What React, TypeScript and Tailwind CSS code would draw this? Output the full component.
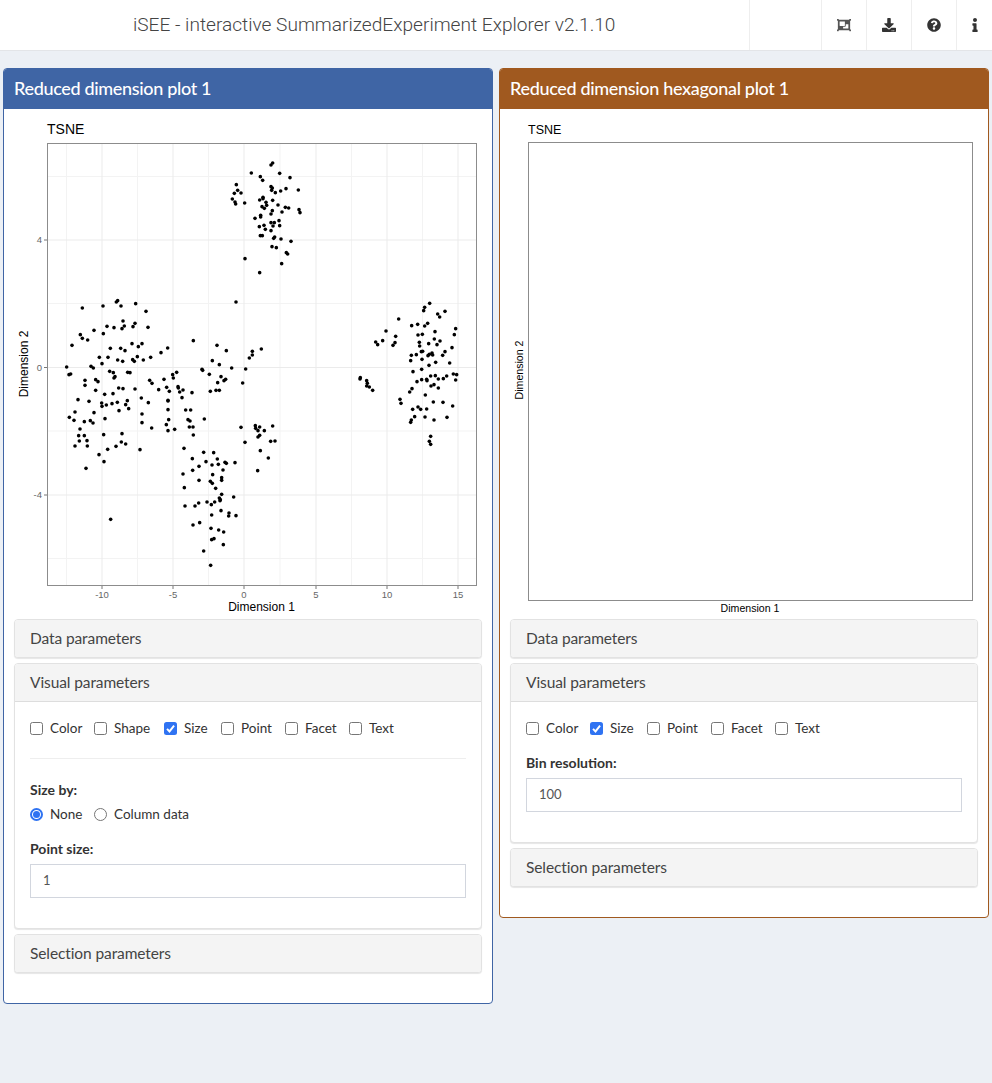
import { FaDownload, FaInfo, FaObjectGroup, FaQuestionCircle } from "react-icons/fa";

type Pt = [number, number];

// dots read off the reference in 3x crops, each group with its own crop origin
const toPlot = (pts: Pt[], ox: number, oy: number): Pt[] =>
  pts.map(([x, y]) => [ox + x / 3, oy + y / 3]);

const topCluster: Pt[] = [
  [158,69],[153,75],[94,99],[179,100],[121,110],[128,121],[210,113],[49,134],[153,140],[157,144],[155,151],[198,146],[182,153],[166,158],[235,150],[53,151],[43,160],[63,159],[37,177],[45,186],[47,192],[74,189],[129,172],[119,180],[129,176],[158,181],[138,187],[140,196],[126,200],[133,205],[174,195],[196,202],[206,204],[157,212],[153,222],[186,216],[237,209],[240,218],[122,226],[122,231],[105,235],[177,242],[153,248],[163,248],[118,260],[132,256],[159,258],[179,257],[136,268],[153,272],[121,287],[127,287],[164,291],[161,295],[183,297],[213,304],[156,320],[169,323],[199,338],[203,342],[75,356],[185,371],[119,398],
];

const leftCluster: Pt[] = [
  [233,32],[229,36],[127,54],[189,48],[243,48],[287,41],[318,64],[249,93],[201,109],[222,113],[253,108],[246,116],[285,100],[279,110],[324,112],[162,121],[190,131],[121,134],[127,145],[143,150],[96,166],[276,161],[306,161],[211,175],[242,175],[255,182],[295,170],[178,202],[204,202],[233,210],[248,214],[278,209],[283,214],[292,200],[310,210],[186,221],[80,231],[153,229],[160,234],[209,244],[220,248],[225,260],[222,264],[263,247],[270,248],[92,252],[87,254],[135,271],[135,286],[167,269],[174,275],[329,271],[167,301],[236,294],[249,296],[285,297],[194,313],[219,311],[304,324],[114,329],[147,334],[185,339],[186,349],[199,345],[216,341],[232,337],[262,332],[257,344],[266,356],[325,338],[237,362],[105,366],[162,368],[306,372],[88,382],[102,391],[133,395],[151,392],[159,399],[195,386],[306,398],[120,417],[116,437],[133,437],[191,434],[246,431],[118,453],[141,452],[244,456],[257,462],[105,468],[142,468],[228,469],[203,478],[300,479],[177,494],[192,515],[138,535],[212,688],
];

const middleCluster: Pt[] = [
  [130,32],[53,54],[33,68],[2,82],[201,46],[229,62],[307,64],[307,75],[298,84],[334,57],[187,92],[208,104],[245,114],[156,118],[158,121],[287,117],[80,127],[68,134],[70,144],[42,148],[178,133],[213,140],[227,148],[222,152],[203,158],[278,159],[6,160],[50,172],[84,170],[85,174],[26,179],[58,184],[89,186],[99,180],[126,188],[181,184],[198,181],[208,181],[96,203],[54,211],[54,213],[54,239],[107,240],[122,240],[56,269],[114,269],[120,273],[163,267],[49,284],[118,291],[129,291],[273,292],[316,287],[317,295],[329,291],[324,302],[343,302],[368,288],[5,294],[54,302],[74,298],[130,315],[329,316],[324,321],[285,337],[362,334],[375,333],[102,355],[331,362],[161,367],[191,368],[355,384],[127,386],[168,395],[202,387],[225,397],[229,400],[255,398],[147,409],[186,405],[205,403],[128,421],[219,420],[323,422],[99,432],[188,434],[215,443],[215,451],[147,451],[181,454],[187,460],[103,473],[197,475],[215,493],[251,501],[208,504],[211,509],[210,512],[146,519],[171,516],[184,524],[194,516],[105,528],[135,528],[213,542],[237,549],[236,558],[258,557],[185,555],[149,578],[129,585],[183,595],[206,600],[221,606],[192,626],[185,629],[220,644],[161,663],[182,706],
];

const rightCluster: Pt[] = [
  [239,40],[224,52],[221,62],[263,72],[269,81],[285,64],[146,87],[233,100],[224,108],[203,103],[185,107],[108,123],[255,125],[317,116],[313,134],[204,135],[217,133],[137,139],[98,152],[77,156],[83,164],[135,158],[129,166],[253,147],[270,153],[208,157],[209,168],[236,161],[261,164],[306,173],[214,185],[218,184],[285,185],[278,196],[184,196],[199,194],[238,193],[246,189],[234,197],[248,195],[216,208],[182,212],[257,217],[299,219],[237,226],[215,238],[189,245],[310,252],[320,254],[317,270],[290,258],[280,266],[265,267],[256,257],[242,258],[230,268],[231,272],[215,269],[201,275],[31,263],[30,267],[50,272],[52,280],[50,288],[58,291],[68,301],[186,296],[179,306],[243,288],[252,284],[265,294],[226,315],[150,328],[153,340],[250,336],[279,337],[308,348],[188,358],[204,351],[212,358],[230,357],[194,380],[184,390],[182,397],[225,381],[252,390],[291,382],[242,439],[238,454],[242,463],
];

const dots: Pt[] = [
  ...toPlot(topCluster, 220, 140),
  ...toPlot(leftCluster, 40, 290),
  ...toPlot(middleCluster, 150, 330),
  ...toPlot(rightCluster, 350, 290),
  [236, 302],
];

const xTicks = [
  { x: 102, label: "-10" },
  { x: 173, label: "-5" },
  { x: 244, label: "0" },
  { x: 316, label: "5" },
  { x: 387, label: "10" },
  { x: 458, label: "15" },
];
const yTicks = [
  { y: 240, label: "4" },
  { y: 367.5, label: "0" },
  { y: 495, label: "-4" },
];
const xMinor = [66.5, 137.5, 208.5, 280, 351.5, 422.5];
const yMinor = [176.5, 303.5, 431, 558.5];

const plotFont = "'Liberation Sans', Arial, sans-serif";

function ScatterPlot() {
  return (
    <svg width={468} height={510} viewBox="14 109 468 510" className="block" style={{ fontFamily: plotFont }}>
      <text x={47} y={134} fontSize={14} fill="#000">TSNE</text>
      {xMinor.map((x) => <line key={x} x1={x} x2={x} y1={143} y2={585} stroke="#f3f3f3" />)}
      {yMinor.map((y) => <line key={y} x1={47} x2={476} y1={y} y2={y} stroke="#f3f3f3" />)}
      {xTicks.map((t) => <line key={t.x} x1={t.x} x2={t.x} y1={143} y2={585} stroke="#ebebeb" />)}
      {yTicks.map((t) => <line key={t.y} x1={47} x2={476} y1={t.y} y2={t.y} stroke="#ebebeb" />)}
      {dots.map(([x, y], i) => <circle key={i} cx={x} cy={y} r={1.8} fill="#000" />)}
      <rect x={47.5} y={143.5} width={429} height={442} fill="none" stroke="#8c8c8c" />
      {xTicks.map((t) => (
        <g key={t.label}>
          <line x1={t.x} x2={t.x} y1={586} y2={589} stroke="#777" />
          <text x={t.x} y={598} fontSize={9.5} fill="#666" textAnchor="middle">{t.label}</text>
        </g>
      ))}
      {yTicks.map((t) => (
        <g key={t.label}>
          <line x1={44} x2={47} y1={t.y} y2={t.y} stroke="#777" />
          <text x={42} y={t.y + 3} fontSize={9.5} fill="#666" textAnchor="end">{t.label}</text>
        </g>
      ))}
      <text x={261.5} y={611} fontSize={12} fill="#000" textAnchor="middle">Dimension 1</text>
      <text transform="translate(28 364) rotate(-90)" fontSize={12} fill="#000" textAnchor="middle">Dimension 2</text>
    </svg>
  );
}

function HexPlot() {
  return (
    <svg width={468} height={510} viewBox="510 109 468 510" className="block" style={{ fontFamily: plotFont }}>
      <text x={528} y={134} fontSize={12.5} fill="#000">TSNE</text>
      <rect x={528.5} y={142.5} width={444} height={458} fill="none" stroke="#8c8c8c" />
      <text x={750} y={612} fontSize={10.6} fill="#000" textAnchor="middle">Dimension 1</text>
      <text transform="translate(523 370) rotate(-90)" fontSize={10.6} fill="#000" textAnchor="middle">Dimension 2</text>
    </svg>
  );
}

function Check({ label, checked, className }: { label: string; checked?: boolean; className: string }) {
  return (
    <label className={`flex items-center gap-[7px] ${className}`}>
      {checked ? (
        <span className="flex h-[13px] w-[13px] items-center justify-center rounded-[2.5px] bg-[#2f73f2]">
          <svg width="11" height="11" viewBox="0 0 12 12" fill="none">
            <path d="M2.2 6.4 4.9 9.2 9.9 2.9" stroke="#fff" strokeWidth="2.1" />
          </svg>
        </span>
      ) : (
        <span className="h-[13px] w-[13px] rounded-[2.5px] border border-[#767676] bg-white" />
      )}
      {label}
    </label>
  );
}

function Radio({ label, checked, className }: { label: string; checked?: boolean; className: string }) {
  return (
    <label className={`flex items-center gap-[7px] ${className}`}>
      {checked ? (
        <span className="flex h-[13px] w-[13px] items-center justify-center rounded-full border-2 border-[#2f73f2] bg-white">
          <span className="h-[7px] w-[7px] rounded-full bg-[#2f73f2]" />
        </span>
      ) : (
        <span className="h-[13px] w-[13px] rounded-full border border-[#767676] bg-white" />
      )}
      {label}
    </label>
  );
}

function TextField({ value }: { value: string }) {
  return (
    <div className="flex h-[34px] items-center border border-[#d2d6de] bg-white pl-3 text-[13px] text-[#555]">
      {value}
    </div>
  );
}

function CollapseBox({ title, children }: { title: string; children?: React.ReactNode }) {
  return (
    <div className="mb-[5px] rounded-[4px] border border-[#e2e2e2] bg-white shadow-[0_1px_1px_rgba(0,0,0,0.1)]">
      <div
        className={`flex items-center rounded-t-[3px] bg-[#f4f4f4] pl-[15px] text-[15.5px] tracking-[-0.1px] text-[#444] ${
          children ? "h-[38px] border-b border-[#ddd]" : "h-[37px] rounded-b-[3px]"
        }`}
      >
        {title}
      </div>
      {children}
    </div>
  );
}

function Panel({
  title,
  barClass,
  borderClass,
  children,
}: {
  title: string;
  barClass: string;
  borderClass: string;
  children: React.ReactNode;
}) {
  return (
    <section className={`w-[490px] overflow-hidden rounded-[4px] border bg-white ${borderClass}`}>
      <h3 className={`flex h-[40px] items-center pb-[2px] pl-[10px] text-[18px] font-medium tracking-[-0.33px] text-white ${barClass}`}>
        {title}
      </h3>
      <div className="px-[10px] pb-[25px]">{children}</div>
    </section>
  );
}

export default function App() {
  return (
    <div
      className="min-h-[1083px] bg-[#ecf0f5] text-[13.5px] text-[#333]"
      style={{ fontFamily: "Lato, 'Noto Sans', sans-serif" }}
    >
      <header className="flex h-[51px] border-b border-[#e3e5e8] bg-white">
        <div
          className="w-[749px] pl-[133px] text-[19.1px] leading-[50px] font-light text-[#444]"
          style={{ fontFamily: "Roboto, 'Liberation Sans', sans-serif" }}
        >
          iSEE - interactive SummarizedExperiment Explorer v2.1.10
        </div>
        <div className="w-[72px] border-l border-[#eee]" />
        <div className="flex w-[45px] items-center justify-center border-l border-[#eee] text-[#555]">
          <FaObjectGroup size={14} />
        </div>
        <div className="flex w-[45px] items-center justify-center border-l border-[#eee] text-[#333]">
          <FaDownload size={14} />
        </div>
        <div className="flex w-[45px] items-center justify-center border-l border-[#eee] text-[#333]">
          <FaQuestionCircle size={14} />
        </div>
        <div className="flex w-[36px] items-center justify-center border-l border-[#eee] text-[#333]">
          <FaInfo size={14} />
        </div>
      </header>

      <main className="flex items-start gap-[6px] pt-[17px] pl-[3px]">
        <Panel title="Reduced dimension plot 1" barClass="bg-[#3f65a5]" borderClass="border-[#3f65a5]">
          <ScatterPlot />
          <CollapseBox title="Data parameters" />
          <CollapseBox title="Visual parameters">
            <div className="px-[15px] pt-[18px] pb-[30px]">
              <div className="flex h-[17px] items-center">
                <Check label="Color" className="w-[64px]" />
                <Check label="Shape" className="w-[70px]" />
                <Check label="Size" checked className="w-[57px]" />
                <Check label="Point" className="w-[64px]" />
                <Check label="Facet" className="w-[64px]" />
                <Check label="Text" className="w-[60px]" />
              </div>
              <hr className="mt-[21px] border-[#eee]" />
              <p className="mt-[20px] text-[14px] font-bold">Size by:</p>
              <div className="mt-[6px] flex h-[17px] items-center">
                <Radio label="None" checked className="w-[64px]" />
                <Radio label="Column data" className="w-[110px]" />
              </div>
              <p className="mt-[15px] text-[14px] font-bold">Point size:</p>
              <div className="mt-[5px]">
                <TextField value="1" />
              </div>
            </div>
          </CollapseBox>
          <CollapseBox title="Selection parameters" />
        </Panel>

        <Panel title="Reduced dimension hexagonal plot 1" barClass="bg-[#a0591f]" borderClass="border-[#a0591f]">
          <HexPlot />
          <CollapseBox title="Data parameters" />
          <CollapseBox title="Visual parameters">
            <div className="px-[15px] pt-[18px] pb-[30px]">
              <div className="flex h-[17px] items-center">
                <Check label="Color" className="w-[64px]" />
                <Check label="Size" checked className="w-[57px]" />
                <Check label="Point" className="w-[64px]" />
                <Check label="Facet" className="w-[64px]" />
                <Check label="Text" className="w-[60px]" />
              </div>
              <p className="mt-[15px] text-[14px] font-bold">Bin resolution:</p>
              <div className="mt-[5px]">
                <TextField value="100" />
              </div>
            </div>
          </CollapseBox>
          <CollapseBox title="Selection parameters" />
        </Panel>
      </main>
    </div>
  );
}
